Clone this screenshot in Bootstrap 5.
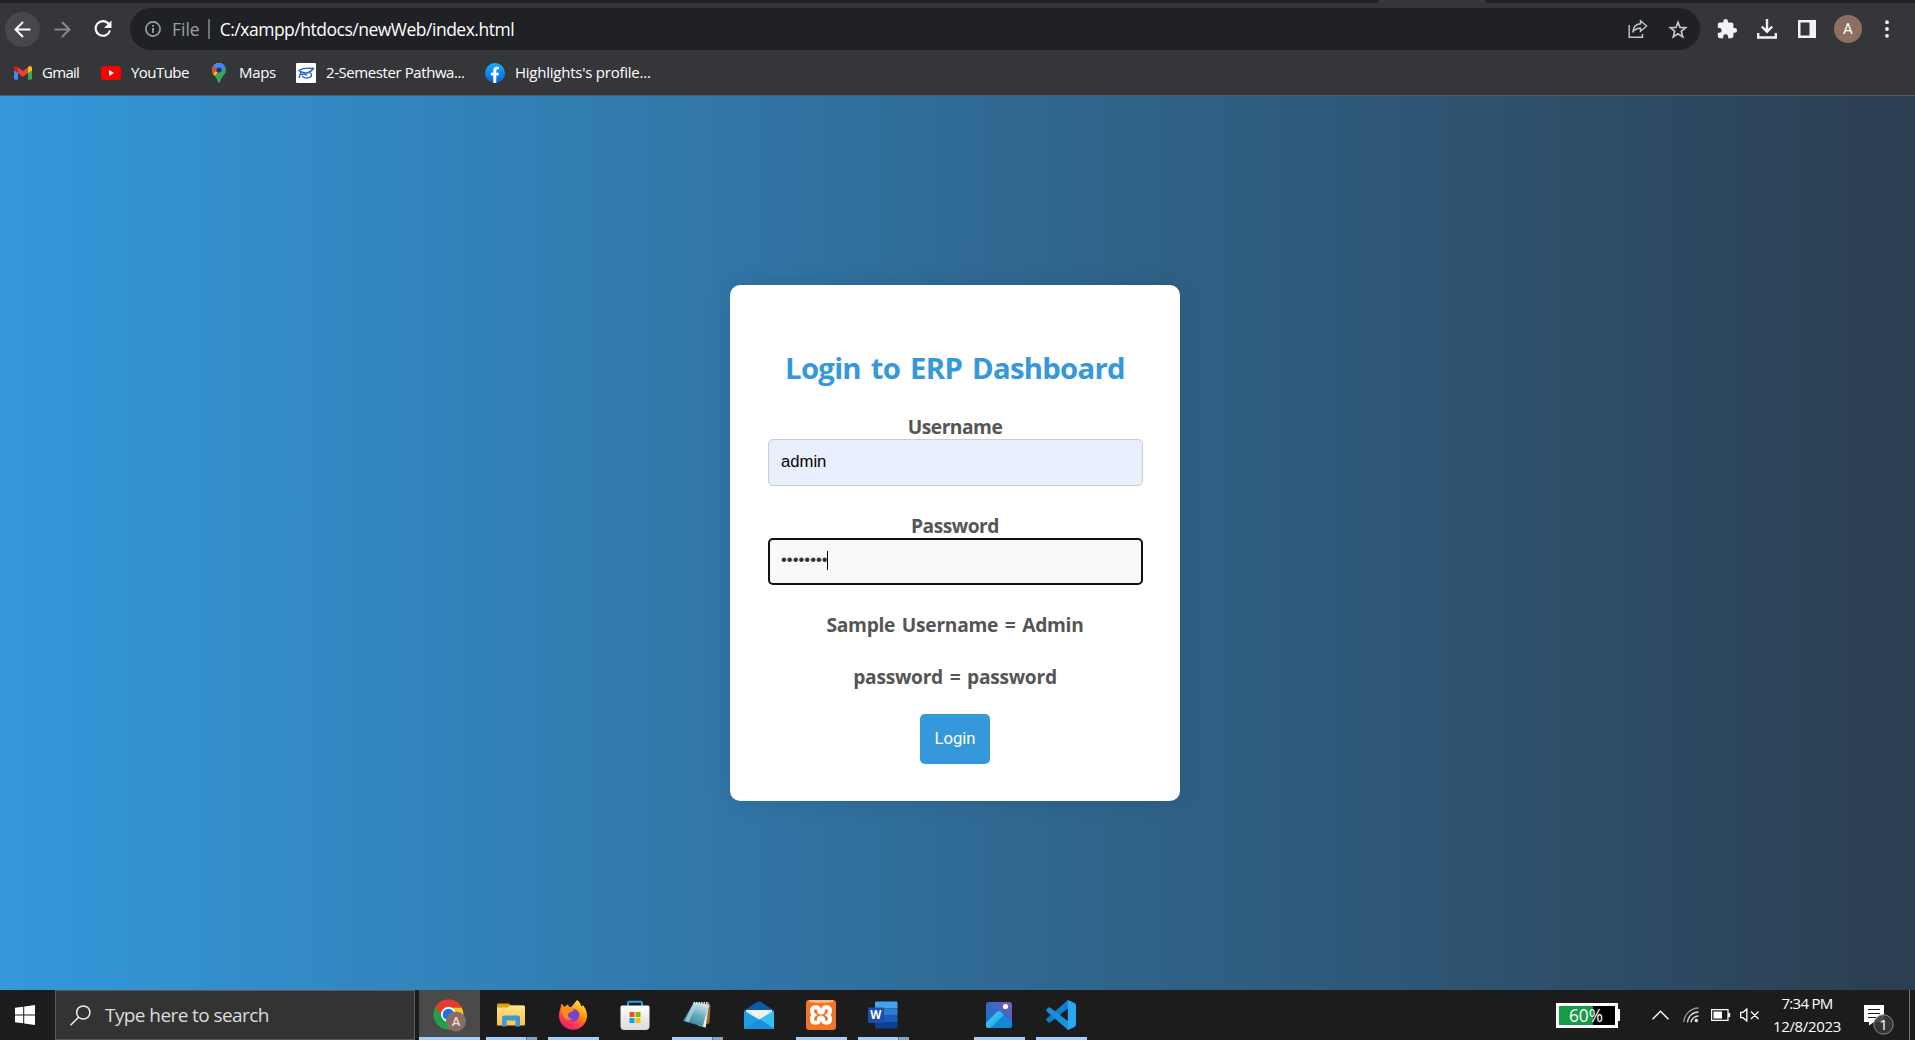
<!DOCTYPE html>
<html lang="en">
<head>
<meta charset="utf-8">
<title>Login to ERP Dashboard</title>
<link href="https://cdn.jsdelivr.net/npm/bootstrap@5.3.0/dist/css/bootstrap.min.css" rel="stylesheet">
<style>
html,body{height:100%}
body{font-family:"Open Sans","Noto Sans",sans-serif;overflow:hidden;background:#202124;color:#fff}
svg{display:block;flex:none}
.tabstrip{height:3px;background:#202124}
.tab-foot{margin-left:1378px;width:108px;height:3px;background:#35363a}
.toolbar{height:47px;background:#35363a;padding-left:5px}
.toolbar>*{margin-top:5px}
.bookmarks{height:46px;background:#35363a;border-bottom:1px solid #5c5d61;font-size:15px;padding-left:14px}
.bookmarks span{line-height:20px;white-space:nowrap;margin-top:-1px}
.navcircle{width:35px;height:35px;background:#47484c}
.omnibox{height:42px;width:1570px;background:#202124;border-radius:21px;font-size:17.5px;margin-left:19px;padding:0 12px 0 15px}
.omnibox span{line-height:24px;margin-top:-1px;white-space:nowrap}
.muted-txt{color:#9aa0a6}
.vsep{width:2px;height:20px;background:#6d7074}
.avatar{width:28px;height:28px;background:#8d6e63;font:15px Roboto,sans-serif}
.viewport{height:894px;background:linear-gradient(to right,#3498db,#2c3e50);padding-right:5px}
.login-card{width:450px;height:516px;background:#fff;border-radius:10px;box-shadow:0 0 25px rgba(0,0,0,.1);padding:63px 37.5px 36px;color:#555;font-size:19.2px;font-weight:700}
.login-card h2{font-size:29.3px;font-weight:700;line-height:40px;margin:0 0 26px;color:#3498db;letter-spacing:-.72px;word-spacing:3px}
.login-card label,.login-card p{display:block;line-height:26px;margin:0}
.login-card .form-control{height:47px;margin-top:-1px;border:1px solid #ccc;border-radius:5px;padding:0 12.5px 1px;font:16.67px "Liberation Sans",Arial,sans-serif;color:#000;background:#e8f0fe}
.login-card .form-control.active-field{border:2px solid #101010;background:#f9f9f9;padding:0 11.5px 2.5px;color:#333}
.after-field{padding-top:27px}
.caret{position:absolute;left:59px;top:13px;width:1px;height:19px;background:#000}
.btn-login{--bs-btn-color:#fff;--bs-btn-bg:#3498db;--bs-btn-border-width:0;width:70px;height:50px;border-radius:5px;font:16.67px Roboto,"Open Sans",sans-serif;padding:0 0 2px;margin-top:24px}
.taskbar{height:50px;background:#1c1c1c}
.start{width:55px}
.searchbox{width:360px;height:50px;background:#333;border:1px solid #5b5b5b;color:#dcdcdc;font-size:19px;padding-left:14px;letter-spacing:-.58px}
.tile{width:62px;height:50px;padding-right:2px;position:relative}
.tile.open::after{content:"";position:absolute;left:5px;bottom:0;width:51px;height:3px;background:#a6d0fb}
.tile.multi::after{background:linear-gradient(to right,#a6d0fb 40px,#5b7690 40px,#5b7690 41px,#82a5c6 41px)}
.tile.current{width:61px;padding-right:0;background:#4a4a4a;margin-left:4px}
.tile.current::after{left:0;width:61px}
.battery-meter{width:62px;height:25px;border:3px solid #fff;background:linear-gradient(to right,#189a48 34px,#000 34px);font-size:17.3px;line-height:19px;text-align:center;padding-right:2px}
.battery-nub{width:2px;height:12px;background:#fff}
.clock{width:76px;font-size:15px;line-height:23px}
.ls1{letter-spacing:-.7px}.ls2{letter-spacing:-.5px}.ls3{word-spacing:2px;letter-spacing:-.28px}
.ls4{letter-spacing:-.49px}.ls5{letter-spacing:-.54px}.ls6{letter-spacing:-.33px}.ls7{letter-spacing:-.24px}
.ls8{letter-spacing:-.42px}
.showdesk{width:6px;border-left:1px solid #777}
</style>
<script src="https://cdn.jsdelivr.net/npm/bootstrap@5.3.0/dist/js/bootstrap.bundle.min.js"></script>
</head>
<body>
<header>
  <div class="tabstrip"><div class="tab-foot"></div></div>
  <div class="toolbar d-flex align-items-center">
    <div class="navcircle rounded-circle d-flex align-items-center justify-content-center">
      <svg width="17" height="17" viewBox="0 0 17 17" fill="none" stroke="#fff" stroke-width="2"><path d="M16.500 8.500H2M9 1L1.500 8.500L9 16"/></svg>
    </div>
    <svg style="margin-left:14px" width="17" height="17" viewBox="0 0 17 17" fill="none" stroke="#87888b" stroke-width="2"><path d="M.5 8.500H15M8 1L15.500 8.500L8 16"/></svg>
    <svg style="margin-left:23px" width="18" height="18" viewBox="0 0 18 18"><path d="M14.800 4A7.300 7.300 0 1 0 16 10.500" fill="none" stroke="#fff" stroke-width="2.100"/><path d="M17.500 .5V8H10Z" fill="#fff"/></svg>
    <div class="omnibox d-flex align-items-center" style="margin-left:18px">
      <svg width="16" height="16" viewBox="0 0 16 16"><circle cx="8" cy="8" r="7.100" fill="none" stroke="#9aa0a6" stroke-width="1.700"/><path d="M8 7v5M8 4v1.800" stroke="#9aa0a6" stroke-width="1.800"/></svg>
      <span class="muted-txt" style="margin-left:11px">File</span>
      <div class="vsep" style="margin-left:8px"></div>
      <span class="ls4" style="margin-left:10px">C:/xampp/htdocs/newWeb/index.html</span>
      <svg class="ms-auto" width="20" height="20" viewBox="0 0 20 20" fill="none" stroke="#c4c7c9" stroke-width="1.400"><path d="M1.200 6V18.300H14.500V15"/><path d="M12.500 1.800L18.600 7L12.500 12.200V9.200C9 9 6.500 10.200 4.800 13.300C5 8.500 8 5.200 12.500 4.800Z"/></svg>
      <svg style="margin-left:20px;margin-top:1px" width="20" height="20" viewBox="0 0 20 20" fill="none" stroke="#c4c7c9" stroke-width="1.700"><path d="M10 2.300L12 7.400L17.600 7.800L13.300 11.300L14.700 16.900L10 13.800L5.300 16.900L6.700 11.300L2.400 7.800L8 7.400Z"/></svg>
    </div>
    <svg style="margin-left:16px" width="22" height="22" viewBox="0 0 24 24" fill="#f1f3f4"><path d="M20.500 11H19V7a2 2 0 0 0-2-2h-4V3.500a2.500 2.500 0 0 0-5 0V5H4a2 2 0 0 0-2 2v3.800h1.500a2.700 2.700 0 0 1 0 5.400H2V20a2 2 0 0 0 2 2h3.800v-1.500a2.700 2.700 0 0 1 5.400 0V22H17a2 2 0 0 0 2-2v-4h1.500a2.500 2.500 0 0 0 0-5z"/></svg>
    <svg style="margin-left:19px" width="20" height="20" viewBox="0 0 20 20" fill="none" stroke="#f1f3f4" stroke-width="2.400"><path d="M10 0V12M4.800 7.500L10 12.700L15.200 7.500M1.200 14V18.500H18.800V14"/></svg>
    <svg style="margin-left:21px" width="18" height="18" viewBox="0 0 18 18"><path d="M0 0H18V18H0ZM2.500 2.500V15.500H11.500V2.500Z" fill="#f1f3f4" fill-rule="evenodd"/></svg>
    <div class="avatar rounded-circle d-flex align-items-center justify-content-center" style="margin-left:18px">A</div>
    <svg style="margin-left:23px" width="4" height="18" viewBox="0 0 4 18" fill="#f1f3f4"><circle cx="2" cy="2.200" r="1.900"/><circle cx="2" cy="9" r="1.900"/><circle cx="2" cy="15.800" r="1.900"/></svg>
  </div>
  <div class="bookmarks d-flex align-items-center">
    <svg width="18" height="14" viewBox="0 0 18 14"><path d="M0 2V12.500a1.300 1.300 0 0 0 1.300 1.300H4V6Z" fill="#4285f4"/><path d="M18 2V12.500a1.300 1.300 0 0 1-1.300 1.300H14V6Z" fill="#34a853"/><path d="M14 2L18 5V2C18 .2 16 -.6 14.600 .6Z" fill="#fbbc04"/><path d="M14 1.200L18 2V4.500L14 7Z" fill="#fbbc04"/><path d="M0 2C0 .2 2 -.6 3.400 .6L4 1.200V7L0 4.500Z" fill="#c5221f"/><path d="M4 1.200L9 5L14 1.200V7L9 10.700L4 7Z" fill="#ea4335"/></svg>
    <span class="ls1" style="margin-left:10px;width:48px">Gmail</span>
    <svg style="margin-left:11px" width="20" height="14" viewBox="0 0 20 14"><rect width="20" height="14" rx="3.300" fill="#f00"/><path d="M8 4L13 7L8 10Z" fill="#fff"/></svg>
    <span class="ls5" style="margin-left:10px;width:71px">YouTube</span>
    <svg style="margin-left:10px" width="14" height="20" viewBox="0 0 14 20"><defs><clipPath id="pin"><path d="M7 0a7 7 0 0 1 7 7c0 5-5 6.500-5.800 11.800q-1.200 2-2.400 0C5 13.500 0 12 0 7a7 7 0 0 1 7-7z"/></clipPath></defs><g clip-path="url(#pin)"><path d="M0 0H14V20H0Z" fill="#34a853"/><path d="M0 0H14L0 16Z" fill="#fbbc04"/><path d="M0 0H14V3L7 11L0 5Z" fill="#4285f4"/><path d="M0 2L5 6.500L1 11H0Z" fill="#ea4335"/><path d="M9 0L14 3.500L10 8Z" fill="#4285f4"/></g><circle cx="7" cy="7" r="2.600" fill="#1e3a5f"/></svg>
    <span class="ls6" style="margin-left:13px;width:46px">Maps</span>
    <svg style="margin-left:11px" width="20" height="20" viewBox="0 0 20 20" fill="none" stroke="#1f5fd0" stroke-width="1.400"><rect width="20" height="20" rx="1" fill="#fff" stroke="none"/><path d="M2.500 7.500Q8 4.200 17.500 5.500Q15 9 10 10.200Q6 9.500 2.500 7.500M5 9L3 15M6 13.200Q11 17 15.300 13.200Q16 11 14 9.500M5 11.500Q9 10.500 11 12.500"/></svg>
    <span class="ls8" style="margin-left:10px;width:148px">2-Semester Pathwa...</span>
    <svg style="margin-left:11px" width="20" height="20" viewBox="0 0 20 20"><defs><linearGradient id="fb" x2="0" y2="1"><stop stop-color="#19afff"/><stop offset="1" stop-color="#0062e0"/></linearGradient></defs><circle cx="10" cy="10" r="10" fill="url(#fb)"/><path d="M8.300 20V12.500H5.800V9.700H8.300V7.500C8.300 5 9.800 3.700 12 3.700L14 3.900V6.300H12.800C11.600 6.300 11.300 7 11.300 7.800V9.700H13.900L13.500 12.500H11.300V20Z" fill="#fff"/></svg>
    <span class="ls7" style="margin-left:10px">Highlights's profile...</span>
  </div>
</header>

<main class="viewport d-flex align-items-center justify-content-center">
  <form class="login-card text-center">
    <h2>Login to ERP Dashboard</h2>
    <label for="user" class="ls2">Username</label>
    <input id="user" class="form-control" type="text" value="admin">
    <label for="pass" class="ls2 after-field">Password</label>
    <div class="position-relative">
      <input id="pass" class="form-control active-field" type="password" value="password">
      <div class="caret"></div>
    </div>
    <p class="ls3 after-field">Sample Username = Admin</p>
    <p class="ls3" style="margin-top:26px">password = password</p>
    <button type="button" class="btn btn-login d-block mx-auto">Login</button>
  </form>
</main>

<footer class="taskbar d-flex">
  <div class="start d-flex align-items-center" style="padding-left:15px">
    <svg width="20" height="20" viewBox="0 0 20 20" fill="#fff"><path d="M0 2.800L8.200 1.700V9.500H0ZM9.200 1.500L20 0V9.500H9.200ZM0 10.500H8.200V18.300L0 17.200ZM9.200 10.500H20V20L9.200 18.500Z"/></svg>
  </div>
  <div class="searchbox d-flex align-items-center">
    <svg width="21" height="21" viewBox="0 0 21 21" fill="none" stroke="#f0f0f0" stroke-width="1.500"><circle cx="13.300" cy="7.500" r="6.600"/><path d="M8.600 12.200L.5 20.300"/></svg>
    <span style="margin-left:14px">Type here to search</span>
  </div>
  <div class="tile current open d-flex align-items-center justify-content-center">
    <svg width="33" height="33" viewBox="0 0 33 33"><path d="M15.500 15.500L2.500 8A15 15 0 0 1 28.500 8Z" fill="#e33b2e"/><path d="M15.500 15.500L2.500 8A15 15 0 0 0 15.500 30.500L22 19Z" fill="#1fa047"/><path d="M15.500 8.500H28.700A15 15 0 0 1 15.500 30.500L22 19Z" fill="#fdc41c"/><path d="M2.500 8A15 15 0 0 1 28.800 8.500H15.500A7 7 0 0 0 9.400 19Z" fill="#e33b2e"/><circle cx="15.500" cy="15.500" r="7.500" fill="#fff"/><circle cx="15.500" cy="15.500" r="5.800" fill="#1a73e8"/><circle cx="23" cy="22.500" r="10" fill="#8a6d64"/><text x="23" y="27.300" font-family="Roboto" font-weight="500" font-size="13" fill="#e8dedb" text-anchor="middle">A</text></svg>
  </div>
  <div class="tile open multi d-flex align-items-center justify-content-center" style="margin-left:1px">
    <svg width="28" height="24" viewBox="0 0 28 24"><defs><linearGradient id="fo" x2="0" y2="1"><stop stop-color="#ffe38c"/><stop offset="1" stop-color="#fbc540"/></linearGradient></defs><path d="M0 1.500Q0 .5 1 .5H12L14 2.500H26.500Q28 2.500 28 4V8H0Z" fill="#dfa000"/><path d="M13 2.500H26.500Q28 2.500 28 4V21.500Q28 22.500 27 22.500H1Q0 22.500 0 21.500V4.500H11Z" fill="url(#fo)"/><path d="M5 23.500V14.500Q5 12.500 7 12.500H21Q23 12.500 23 14.500V23.500H18.500V17.500H9.500V23.500Z" fill="#3f97d6"/></svg>
  </div>
  <div class="tile open d-flex align-items-center justify-content-center">
    <svg width="30" height="30" viewBox="0 0 30 30"><defs><linearGradient id="ff" x1=".8" y1="0" x2=".3" y2="1"><stop stop-color="#fff04a"/><stop offset=".4" stop-color="#ff980e"/><stop offset=".75" stop-color="#ff3750"/><stop offset="1" stop-color="#ed1a80"/></linearGradient></defs><path d="M19 0C22 2 22.500 4 23 6C24 6.500 24.500 6 24.800 5C28 9 29 12 29 15.500A14 14 0 0 1 1 16C1 10.500 3 8.500 3.300 3.500L6.500 7C8 5.500 8.500 5 10 4.500C10.200 6 11 7 13 7.200C15 5.500 16.500 3 19 0Z" fill="url(#ff)"/><circle cx="15" cy="15" r="6.300" fill="#7542d6"/><path d="M3.500 7.500L10 7.300L16 9.500C15.500 12 12 11.500 10 14C9.500 17 12 19 15 19C7 22 3 15 3.500 7.500Z" fill="#ff8a16"/></svg>
  </div>
  <div class="tile d-flex align-items-center justify-content-center">
    <svg width="30" height="30" viewBox="0 0 30 30"><defs><linearGradient id="bag" x2="0" y2="1"><stop stop-color="#fff"/><stop offset="1" stop-color="#d9dadb"/></linearGradient></defs><path d="M8 7V3Q8 1.800 9.200 1.800H20.800Q22 1.800 22 3V7" fill="none" stroke="#1ca7e8" stroke-width="2"/><path d="M2 5.500H28Q29.500 5.500 29.500 7V26Q29.500 30 25.500 30H4.500Q.5 30 .5 26V7Q.5 5.500 2 5.500Z" fill="url(#bag)"/><path d="M9.500 12H14.500V17H9.500Z" fill="#f25022"/><path d="M15.500 12H20.500V17H15.500Z" fill="#7fba00"/><path d="M9.500 18H14.500V23H9.500Z" fill="#00a4ef"/><path d="M15.500 18H20.500V23H15.500Z" fill="#ffb900"/></svg>
  </div>
  <div class="tile open multi d-flex align-items-center justify-content-center">
    <svg width="28" height="28" viewBox="0 0 28 28"><defs><linearGradient id="np" x1=".7" y1="0" x2=".3" y2="1"><stop stop-color="#d7eef2"/><stop offset=".45" stop-color="#70b3c3"/><stop offset="1" stop-color="#2e8296"/></linearGradient></defs><path d="M25.500 3L27.500 4L26.500 22L22 24Z" fill="#9a6c2c"/><path d="M22 4L26 3.500L22.500 26.500L15 24.500Z" fill="#dbe4e5"/><path d="M11 1.500L26 3.500L20 25.500L0 20Z" fill="url(#np)"/><path d="M2 20L11 2L13 4L6 21Z" fill="#a9dbe5" opacity=".7"/><path d="M20 25.500L24 10L22.500 26.500Z" fill="#eef3f4"/><path d="M10.500 2H26" stroke="#e4ecee" stroke-width="1.800" stroke-dasharray="1.500 1"/></svg>
  </div>
  <div class="tile d-flex align-items-center justify-content-center">
    <svg width="30" height="28" viewBox="0 0 30 28"><path d="M0 9.500L13.500 .8Q15 0 16.500 .8L30 9.500L15 20Z" fill="#0a5cad"/><path d="M2 9H28V13L15 20L2 13Z" fill="#f1f1f1"/><path d="M0 9.500L15 18.500L30 28H0Z" fill="#1e9ce4"/><path d="M30 9.500V28L15 18.500Z" fill="#35c0f2"/><path d="M16 18.200L30 28H0L15 18.800Z" fill="#1b8fdc"/></svg>
  </div>
  <div class="tile open d-flex align-items-center justify-content-center">
    <svg width="30" height="30" viewBox="0 0 30 30"><rect width="30" height="30" rx="3" fill="#f37423"/><path d="M3 0H27V2Q15 4 3 2Z" fill="#ffb387"/><path d="M9.800 7.300Q13 7.300 13 10.500Q13 12.500 15 12.500Q17 12.500 17 10.500Q17 7.300 20.200 7.300Q24 7.300 24 10.800Q24 13.500 22 15Q24 16.500 24 19.200Q24 22.700 20.200 22.700Q17 22.700 17 19.500Q17 17.500 15 17.500Q13 17.500 13 19.500Q13 22.700 9.800 22.700Q6 22.700 6 19.200Q6 16.500 8 15Q6 13.500 6 10.800Q6 7.300 9.800 7.300Z" fill="none" stroke="#fff" stroke-width="4"/></svg>
  </div>
  <div class="tile open multi d-flex align-items-center justify-content-center">
    <svg width="30" height="28" viewBox="0 0 30 28"><path d="M8 .5H28.500Q29.500 .5 29.500 1.500V7.500H7V1.500Q7 .5 8 .5Z" fill="#41a5ee"/><path d="M7 7.500H29.500V14H7Z" fill="#2b7cd3"/><path d="M7 14H29.500V21H7Z" fill="#185abd"/><path d="M7 21H29.500V26.500Q29.500 27.500 28.500 27.500H8Q7 27.500 7 26.500Z" fill="#103f91"/><rect x="0" y="6.500" width="16" height="15.500" rx="1.300" fill="#1a4fae"/><text x="7.700" y="18.300" font-family="Open Sans" font-weight="700" font-size="11.500" fill="#fff" text-anchor="middle">W</text></svg>
  </div>
  <div class="tile open d-flex align-items-center justify-content-center" style="margin-left:54px">
    <svg width="26" height="26" viewBox="0 0 26 26"><defs><linearGradient id="ph" x1="0" y1="1" x2="1" y2="0"><stop stop-color="#1277d6"/><stop offset=".5" stop-color="#2f6cc8"/><stop offset="1" stop-color="#8a55b0"/></linearGradient><linearGradient id="mt" x2="1" y2="1"><stop stop-color="#4fe0fb"/><stop offset="1" stop-color="#1390dd"/></linearGradient></defs><rect width="26" height="26" rx="2.500" fill="url(#ph)"/><path d="M0 21L11 10Q13 8.500 15 10L26 20.500V23.500Q26 26 23.500 26H2.500Q0 26 0 23.500Z" fill="#1286d8"/><path d="M0 21L11 10Q13 8.500 15 10L18 13L4.500 26H2.500Q0 26 0 23.500Z" fill="url(#mt)"/><circle cx="19.500" cy="4.500" r="2.600" fill="#fff"/></svg>
  </div>
  <div class="tile open d-flex align-items-center justify-content-center">
    <svg width="30" height="30" viewBox="0 0 30 30"><path d="M22 0L22.500 8L4 22.500Q3 23 2 22L.5 20.500Q-.3 19.500 .8 18.500Z" fill="#0d7fca"/><path d="M.8 11.500Q-.3 10.500 .5 9.500L2 8Q3 7 4 7.500L22.500 21.500L22 30Z" fill="#1a8ed8"/><path d="M22 0L28.500 3Q30 3.700 30 5.500V24.500Q30 26.300 28.500 27L22 30Q21 29.500 21.800 28V2Q21 .5 22 0Z" fill="#2ba6f1"/></svg>
  </div>

  <div class="ms-auto d-flex align-items-center">
    <div class="battery-meter">60%</div><div class="battery-nub"></div>
    <svg style="margin-left:32px" width="17" height="10" viewBox="0 0 17 10" fill="none" stroke="#fff" stroke-width="1.400"><path d="M.5 9.300L8.500 1.200L16.500 9.300"/></svg>
    <svg style="margin-left:14px" width="16" height="16" viewBox="0 0 16 16" fill="none" stroke-width="1.300"><path d="M.8 15A15 15 0 0 1 15.500 1" stroke="#999"/><path d="M4.500 15.500A11 11 0 0 1 15.500 5M8 15.500A7.500 7.500 0 0 1 15.500 9" stroke="#ddd"/><circle cx="13.300" cy="13.500" r="1.700" fill="#fff"/></svg>
    <svg style="margin-left:12px" width="20" height="12" viewBox="0 0 20 12"><path d="M.6 .6H17V11.400H.6Z" fill="none" stroke="#fff" stroke-width="1.200"/><path d="M2.500 2.500H11V9.500H2.500ZM17 4H19.200V8H17Z" fill="#fff"/></svg>
    <svg style="margin-left:9px" width="20" height="14" viewBox="0 0 20 14" fill="none" stroke="#fff" stroke-width="1.300"><path d="M.7 4.300H3L6.800 1V13L3 9.700H.7ZM11 3.500L18.500 11M18.500 3.500L11 11"/></svg>
    <div class="clock text-center" style="margin-left:9px"><div class="ls1">7:34 PM</div><div class="ls6">12/8/2023</div></div>
    <svg style="margin-left:19px;margin-top:10px" width="32" height="30" viewBox="0 0 32 30"><path d="M0 0H20V17H10L5 20.500V17H0Z" fill="#fff"/><path d="M4 4.500H16M4 8.500H16M4 12.500H12" stroke="#1c1c1c" stroke-width="1.200"/><circle cx="19.500" cy="19.500" r="9.700" fill="#3a3a3a" fill-opacity=".9" stroke="#8b8b8b"/><text x="19.500" y="24.800" font-family="Open Sans" font-size="15" fill="#fff" text-anchor="middle">1</text></svg>
    <div class="showdesk align-self-stretch" style="margin-left:13px"></div>
  </div>
</footer>
</body>
</html>
